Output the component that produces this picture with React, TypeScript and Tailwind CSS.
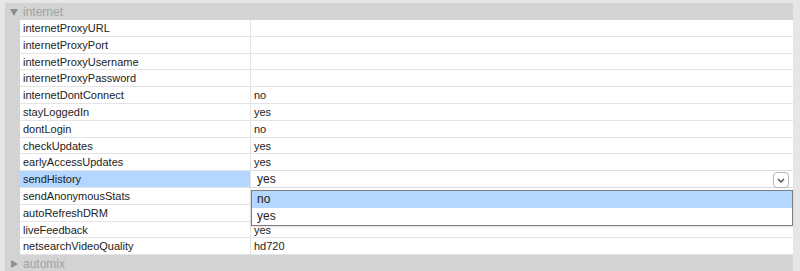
import React from "react";

const rows: [string, string][] = [
  ["internetProxyURL", ""],
  ["internetProxyPort", ""],
  ["internetProxyUsername", ""],
  ["internetProxyPassword", ""],
  ["internetDontConnect", "no"],
  ["stayLoggedIn", "yes"],
  ["dontLogin", "no"],
  ["checkUpdates", "yes"],
  ["earlyAccessUpdates", "yes"],
  ["sendHistory", "yes"],
  ["sendAnonymousStats", ""],
  ["autoRefreshDRM", ""],
  ["liveFeedback", "yes"],
  ["netsearchVideoQuality", "hd720"],
];

function GroupHeader({ label, open }: { label: string; open: boolean }) {
  return (
    <div className="flex h-[17px] items-center bg-[#d3d3d3] pl-[2px] pt-[1px] text-[12px] text-[#a2a2a2]">
      <span className="flex w-[14px] justify-center">
        {open ? (
          <svg width="8" height="7" viewBox="0 0 8 7">
            <path d="M0 0 H8 L4 7 Z" fill="#8e8e8e" />
          </svg>
        ) : (
          <svg width="7" height="8" viewBox="0 0 7 8">
            <path d="M0 0 V8 L7 4 Z" fill="#8e8e8e" />
          </svg>
        )}
      </span>
      <span className="ml-[2px]">{label}</span>
    </div>
  );
}

export default function App() {
  return (
    <div
      className="flex h-[271px] w-[800px] overflow-hidden bg-[#e6e6e6] text-[#222]"
      style={{ fontFamily: '"Liberation Sans", Arial, sans-serif' }}
    >
      <div className="w-[5px]" />
      <div className="flex flex-1 flex-col pt-[3px]">
        <GroupHeader label="internet" open />
        <div className="flex bg-[#d3d3d3]">
          <div className="w-[15px]" />
          <div className="relative flex-1 bg-white">
            {rows.map(([k, v]) => {
              const active = k === "sendHistory";
              return (
                <div key={k} className="flex h-[16.8px] border-b border-[#e4e4e4] text-[11px] leading-[17px]">
                  <div
                    className={`w-[231px] border-r border-[#e4e4e4] pl-[3px] ${active ? "bg-[#b3d7ff]" : ""}`}
                  >
                    {k}
                  </div>
                  {active ? (
                    <div className="relative flex flex-1 items-center border-y border-[#dcdcdc] pl-[6px] -my-[1px] bg-white text-[12px]">
                      {v}
                      <div className="absolute right-[4px] top-[1px] flex h-[16px] w-[16px] items-center justify-center rounded-[4px] border border-[#b8b8b8] bg-white">
                        <svg width="8" height="5" viewBox="0 0 8 5">
                          <path d="M1 1 L4 4 L7 1" fill="none" stroke="#555" strokeWidth="1.5" />
                        </svg>
                      </div>
                    </div>
                  ) : (
                    <div className="flex-1 pl-[3px]">{v}</div>
                  )}
                </div>
              );
            })}
            <div className="absolute left-[231px] top-[170px] z-10 w-[542px] border border-[#7e7e7e] bg-white text-[12px] leading-[17px] shadow-sm">
              <div className="h-[17px] bg-[#b3d7ff] pl-[5px]">no</div>
              <div className="h-[17px] pl-[5px]">yes</div>
            </div>
          </div>
        </div>
        <GroupHeader label="automix" open={false} />
      </div>
      <div className="w-[7px]" />
    </div>
  );
}
